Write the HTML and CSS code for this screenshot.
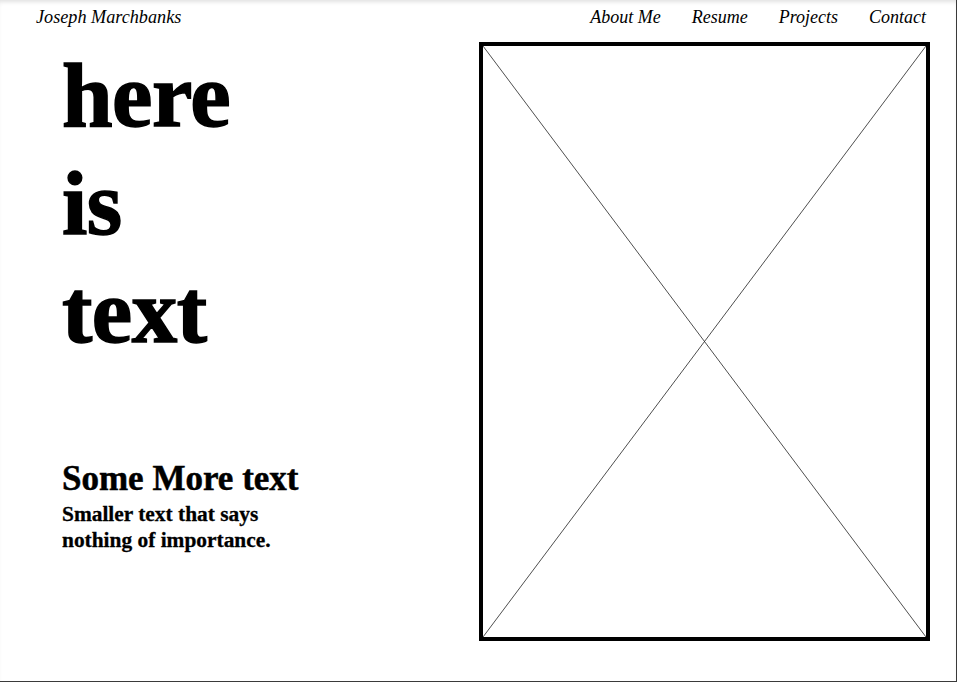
FILE: index.html
```html
<!DOCTYPE html>
<html lang="en">

<head>
    <meta charset="UTF-8">
    <meta name="viewport" content="width=device-width, initial-scale=1.0">
    <link rel="stylesheet" href="styles.css">
</head>

<body>
    <div class="page">
        <header class="top-bar">
            <div class="name">Joseph Marchbanks</div>
            <nav class="nav">
                <a href="#">About Me</a>
                <a href="#">Resume</a>
                <a href="#">Projects</a>
                <a href="#">Contact</a>
            </nav>
        </header>

        <main class="hero">
            <div class="hero-text">
                <h1 class="big-text">here<br>is<br>text</h1>
                <h2 class="sub-title">Some More text</h2>
                <p class="sub-text">Smaller text that says nothing of importance.</p>
            </div>

            <div class="placeholder">
                <svg class="cross" viewBox="0 0 100 100" preserveAspectRatio="none">
                    <line x1="0" y1="0" x2="100" y2="100" vector-effect="non-scaling-stroke"></line>
                    <line x1="100" y1="0" x2="0" y2="100" vector-effect="non-scaling-stroke"></line>
                </svg>
            </div>
        </main>
    </div>
</body>

</html>
```

FILE: styles.css
```css
:root {
    --ink: #000000;
    --frame: #3a3a3a;
    --serif: "Liberation Serif", "Times New Roman", serif;
}

html,
body {
    margin: 0;
    padding: 0;
    background: #ffffff;
}

body {
    font-family: var(--serif);
    color: var(--ink);
}

.page {
    width: 956px;
    height: 681px;
    border-right: 1px solid var(--frame);
    border-bottom: 1px solid var(--frame);
    box-shadow: inset 0 4px 4px -2px rgba(0, 0, 0, 0.12);
    overflow: hidden;
}

.top-bar {
    display: flex;
    justify-content: space-between;
    align-items: baseline;
    padding: 7px 30px 0 36px;
    height: 37px;
    box-sizing: border-box;
}

.name {
    font-style: italic;
    font-size: 18.2px;
}

.nav {
    display: flex;
    gap: 31px;
}

.nav a {
    color: var(--ink);
    text-decoration: none;
    font-style: italic;
    font-size: 18px;
}

.hero {
    display: grid;
    grid-template-columns: 479px 451px;
    padding-top: 5px;
}

.hero-text {
    padding-left: 62px;
}

.big-text {
    margin: 0;
    font-size: 91px;
    line-height: 108px;
    font-weight: bold;
    letter-spacing: -0.5px;
    -webkit-text-stroke: 1.5px var(--ink);
}

.sub-title {
    margin: 93px 0 0 0;
    font-size: 35px;
    line-height: 40px;
    font-weight: bold;
    -webkit-text-stroke: 0.5px var(--ink);
}

.sub-text {
    margin: 2px 0 0 0;
    width: 230px;
    font-size: 21.4px;
    line-height: 26px;
    font-weight: bold;
    -webkit-text-stroke: 0.3px var(--ink);
}

.placeholder {
    width: 451px;
    height: 599px;
    border: 4px solid var(--ink);
    box-sizing: border-box;
}

.cross {
    display: block;
    width: 100%;
    height: 100%;
}

.cross line {
    stroke: #222222;
    stroke-width: 0.8;
}
```
